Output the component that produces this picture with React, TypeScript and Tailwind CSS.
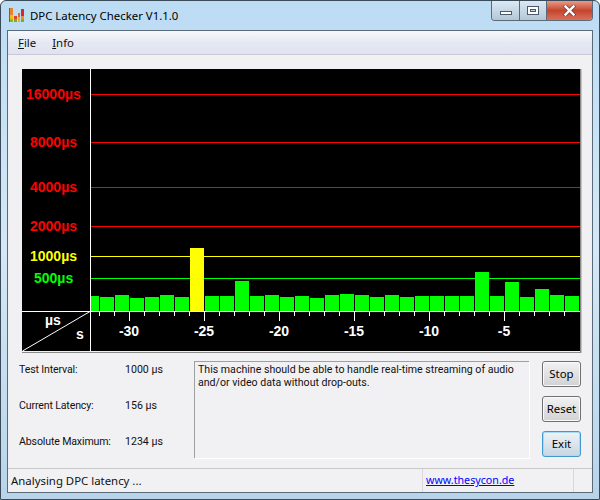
const ui = { fontFamily: 'Roboto, "Noto Sans", sans-serif' };
const noto = { fontFamily: '"Noto Sans", "Open Sans", sans-serif' };

const bars = [
  296, 297, 295, 298, 297, 295, 297, 248, 296, 296, 281, 296, 295, 297, 296, 298, 295, 294, 295,
  297, 295, 297, 296, 296, 296, 296, 272, 296, 282, 297, 289, 295, 296,
];

const grid = [
  { y: 94, color: "#ff0000", label: "16000µs", x: 26 },
  { y: 142, color: "#ff0000", label: "8000µs", x: 30 },
  { y: 187, color: "#ff0000", label: "4000µs", x: 30 },
  { y: 226, color: "#ff0000", label: "2000µs", x: 30 },
  { y: 256, color: "#ffff00", label: "1000µs", x: 30 },
  { y: 278, color: "#00ff00", label: "500µs", x: 34 },
];

const seconds = [
  { x: 129, label: "-30" },
  { x: 204, label: "-25" },
  { x: 279, label: "-20" },
  { x: 354, label: "-15" },
  { x: 429, label: "-10" },
  { x: 504, label: "-5" },
];

function Chart() {
  const ticks = Array.from({ length: 32 }, (_, i) => 99 + i * 15);
  return (
    <svg width="560" height="284" viewBox="22 69 560 284" className="block" fontFamily='"Liberation Sans", Arial, sans-serif' fontWeight="700" shapeRendering="crispEdges">
      <rect x="22" y="69" width="558" height="282" fill="#000" />
      <path d="M580.5 69V352.5H22" fill="none" stroke="#8a8a8a" />
      <path d="M581.5 69V353.5H22" fill="none" stroke="#c4c4c4" />
      {grid.map((g) => (
        <g key={g.label}>
          <rect x="91" y={g.y} width="489" height="1" fill={g.color} />
          <text x={g.x} y={g.y + 5} fontSize="14" fill={g.color} shapeRendering="auto">{g.label}</text>
        </g>
      ))}
      {bars.map((top, i) => {
        const x = i === 0 ? 91 : 85 + i * 15;
        const w = i === 0 ? 8 : 14;
        return <rect key={x} x={x} y={top} width={w} height={311 - top} fill={top === 248 ? "#ffff00" : "#00ff00"} />;
      })}
      <rect x="90" y="69" width="1" height="282" fill="#fff" />
      <rect x="22" y="311" width="558" height="1" fill="#fff" />
      {ticks.map((x) => (
        <rect key={x} x={x} y="312" width="1" height={(x - 129) % 75 === 0 ? 9 : 4} fill="#fff" />
      ))}
      {seconds.map((s) => (
        <text key={s.label} x={s.x} y="336" fontSize="14" fill="#fff" textAnchor="middle" shapeRendering="auto">{s.label}</text>
      ))}
      <line x1="22.5" y1="351" x2="90" y2="311.5" stroke="#fff" shapeRendering="auto" />
      <text x="45" y="325" fontSize="14" fill="#fff" shapeRendering="auto">µs</text>
      <text x="76" y="339" fontSize="14" fill="#fff" shapeRendering="auto">s</text>
    </svg>
  );
}

function AppIcon() {
  return (
    <svg width="16" height="16" viewBox="0 0 16 16" shapeRendering="crispEdges">
      <rect x="0" y="1" width="1" height="14" fill="#8a5a20" />
      <rect x="1" y="1" width="3" height="7" fill="#e8842a" />
      <rect x="1" y="8" width="3" height="4" fill="#e8c020" />
      <rect x="1" y="12" width="3" height="3" fill="#90b828" />
      <rect x="5" y="9" width="3" height="3" fill="#e04030" />
      <rect x="5" y="12" width="3" height="3" fill="#70b030" />
      <rect x="9" y="6" width="2" height="4" fill="#e06a28" />
      <rect x="9" y="10" width="2" height="5" fill="#e8b020" />
      <rect x="12" y="2" width="3" height="7" fill="#d02c24" />
      <rect x="12" y="9" width="3" height="3" fill="#e89020" />
      <rect x="12" y="12" width="3" height="3" fill="#80ac28" />
    </svg>
  );
}

function WinButtons() {
  return (
    <div className="ml-auto flex h-[20px] w-[102px] overflow-hidden rounded-b-[4px] border border-t-0 border-[#5a6a78]">
      <div className="flex w-[28px] items-end justify-center border-r border-[#5a6a78] bg-gradient-to-b from-[#dbe9f4] to-[#b4c6d6] pb-[5px]">
        <div className="h-[4px] w-[12px] border border-[#4a5a6a] bg-white" />
      </div>
      <div className="flex w-[27px] items-center justify-center border-r border-[#5a6a78] bg-gradient-to-b from-[#dbe9f4] to-[#b4c6d6]">
        <div className="flex h-[9px] w-[12px] items-center justify-center border border-[#4a5a6a] bg-white">
          <div className="h-[3px] w-[6px] border border-[#4a5a6a] bg-[#c4d4e0]" />
        </div>
      </div>
      <div className="flex flex-1 items-center justify-center bg-gradient-to-b from-[#e89a86] via-[#c4442e] to-[#d87058]">
        <svg width="13" height="11" viewBox="0 0 13 11">
          <path d="M2.5 1.5 10.5 9.5M10.5 1.5 2.5 9.5" stroke="#4a3a3a" strokeWidth="4" strokeLinecap="square" opacity="0.6" />
          <path d="M2.5 1.5 10.5 9.5M10.5 1.5 2.5 9.5" stroke="#fff" strokeWidth="2.4" strokeLinecap="square" />
        </svg>
      </div>
    </div>
  );
}

function Stat({ label, value }: { label: string; value: string }) {
  return (
    <div className="flex h-[18px] items-center whitespace-nowrap">
      <span className="w-[106px] tracking-[-0.15px]">{label}</span>
      <span>{value}</span>
    </div>
  );
}

function Btn({ children, focus }: { children: string; focus?: boolean }) {
  return (
    <button
      type="button"
      style={noto}
      className={
        focus
          ? "h-[26px] w-[39px] rounded-[3px] border border-[#3c9ad0] bg-gradient-to-b from-[#eef3f7] to-[#c8d6e0] text-[11.4px] text-black shadow-[inset_0_0_0_1px_#a8dcf4]"
          : "h-[26px] w-[39px] rounded-[3px] border border-[#707070] bg-gradient-to-b from-[#f2f2f2] to-[#d2d2d2] text-[11.4px] text-black shadow-[inset_0_0_0_1px_#fafafa]"
      }
    >
      {children}
    </button>
  );
}

export default function App() {
  return (
    <div
      className="flex h-[500px] w-[600px] flex-col overflow-hidden rounded-t-[6px] border border-[#3a4a58] bg-gradient-to-b from-[#bcdcf4] via-[#d4e8f6] to-[#b8d4ea] text-[10.6px] text-[#111]"
      style={ui}
    >
      <div className="flex h-[29px] shrink-0 items-start pl-[8px] pr-[6px]" style={noto}>
        <div className="mt-[6px]">
          <AppIcon />
        </div>
        <span className="ml-[5px] mt-[7px] text-[11.4px] leading-[16px] text-black">DPC Latency Checker V1.1.0</span>
        <WinButtons />
      </div>

      <div className="mx-[6px] mb-[6px] flex flex-1 flex-col border border-[#5a6a78] bg-[#f1f0f2]">
        <div className="flex h-[24px] shrink-0 items-center gap-[16px] border-b border-[#c8c8d8] bg-gradient-to-b from-[#f7f8fc] via-[#e6e9f4] to-[#dfe3ef] pl-[10px] text-[11.4px]" style={noto}>
          <span><span className="underline">F</span>ile</span>
          <span><span className="underline">I</span>nfo</span>
        </div>

        <div className="ml-[14px] mt-[14px]">
          <Chart />
        </div>

        <div className="ml-[11px] mt-[7px] flex">
          <div className="mt-px flex w-[175px] flex-col gap-[18px]">
            <Stat label="Test Interval:" value="1000 µs" />
            <Stat label="Current Latency:" value="156 µs" />
            <Stat label="Absolute Maximum:" value="1234 µs" />
          </div>
          <div className="mt-[1px] h-[97px] w-[335px] border-l border-t border-[#a0a0a0] px-[3px] pt-px leading-[13px] [box-shadow:1px_1px_0_#fff]">
            <p>This machine should be able to handle real-time streaming of audio and/or video data without drop-outs.</p>
          </div>
          <div className="ml-[13px] mt-px flex flex-col gap-[9px]">
            <Btn>Stop</Btn>
            <Btn>Reset</Btn>
            <Btn focus>Exit</Btn>
          </div>
        </div>

        <div className="mt-auto flex h-[24px] shrink-0 items-center border-t border-[#c8c8c8] pl-[3px] text-[11.4px]" style={noto}>
          <span className="w-[411px]">Analysing DPC latency ...</span>
          <div className="flex h-full w-[151px] items-center border-l border-[#d8d8d8] pl-[3px]">
            <a href="#" className="text-[10.7px] text-[#0000ff] underline">www.thesycon.de</a>
          </div>
          <div className="h-full flex-1 border-l border-[#d8d8d8]" />
        </div>
      </div>
    </div>
  );
}
